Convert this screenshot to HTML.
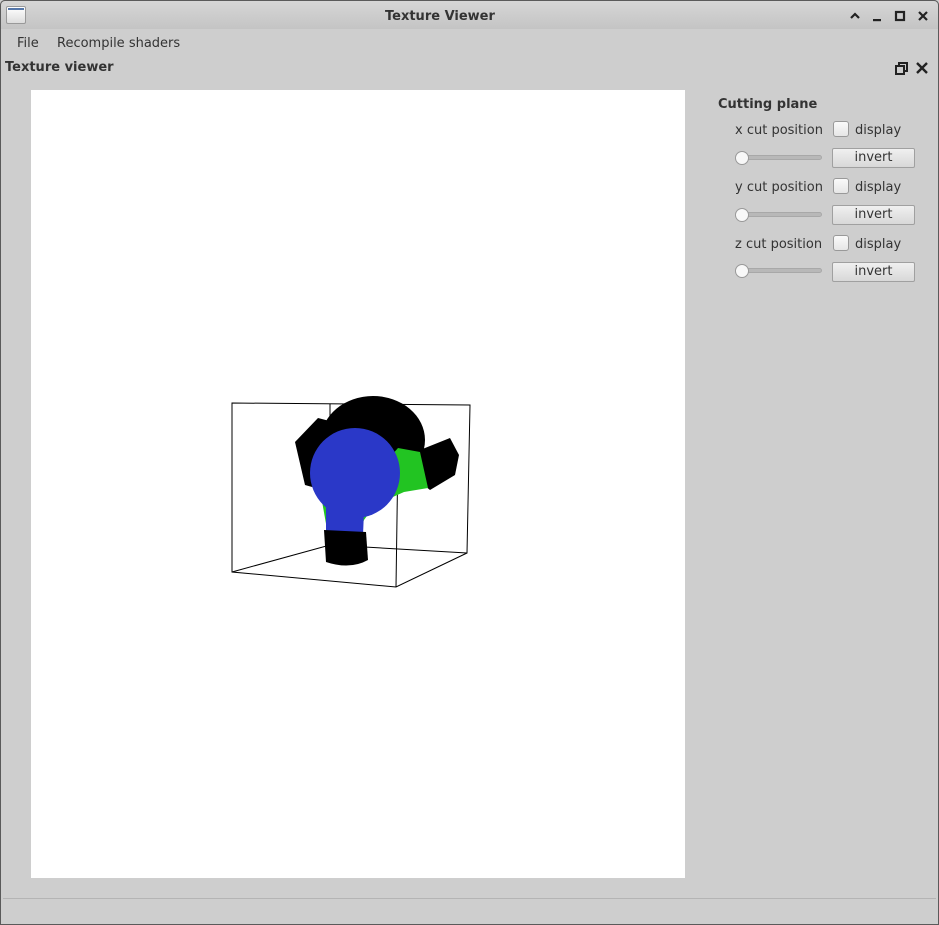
<!DOCTYPE html>
<html><head><meta charset="utf-8"><style>
*{margin:0;padding:0;box-sizing:border-box}
body{width:939px;height:925px;background:#cecece;font-family:"DejaVu Sans","Liberation Sans",sans-serif;font-size:13px;color:#333;position:relative;overflow:hidden}
.win{position:absolute;left:0;top:0;width:939px;height:925px;border:1px solid #5a5a5a;border-radius:5px 5px 0 0}
.title{position:absolute;left:0;top:0;width:939px;height:29px;background:linear-gradient(#d6d6d6,#c4c4c4);border-radius:5px 5px 0 0;border:1px solid #5a5a5a;border-bottom:none}
.title .t{position:absolute;left:384px;top:8px;font-weight:bold;font-size:13px;color:#333}
.abs{position:absolute}
.cb{position:absolute;width:16px;height:16px;border:1px solid #999;border-radius:3px;background:linear-gradient(#fafafa,#e6e6e6)}
.btn{position:absolute;width:83px;height:20px;border:1px solid #a0a0a0;border-radius:2px;background:linear-gradient(#f0f0f0,#d8d8d8);text-align:center;line-height:18px}
.sl{position:absolute;width:82px;height:5px;border-radius:3px;background:#b8b8b8;border:1px solid #a8a8a8}
.kn{position:absolute;width:14px;height:14px;border-radius:50%;background:#f8f8f8;border:1px solid #999}
</style></head><body>
<div class="win"></div>
<div class="title"><div class="t">Texture Viewer</div></div>
<div class="abs" style="left:6px;top:6px;width:20px;height:18px;border:1px solid #999;border-radius:2px;background:linear-gradient(#fff,#ddd)"><div style="height:2px;background:#5577aa;margin:1px 1px 0"></div></div>
<svg class="abs" style="left:845px;top:8px" width="85" height="16">
<path d="M6 10 L10 6 L14 10" stroke="#222" stroke-width="2.2" fill="none"/>
<rect x="28" y="11" width="8" height="2.2" fill="#222"/>
<rect x="51" y="4" width="8" height="8" stroke="#222" stroke-width="2.2" fill="none"/>
<path d="M74 4 L82 12 M82 4 L74 12" stroke="#222" stroke-width="2.2"/>
</svg>
<div class="abs" style="left:17px;top:36px">File</div>
<div class="abs" style="left:57px;top:36px">Recompile shaders</div>
<div class="abs" style="left:5px;top:60px;font-weight:bold">Texture viewer</div>
<svg class="abs" style="left:893px;top:60px" width="38" height="18">
<rect x="3" y="6" width="8" height="8" stroke="#222" stroke-width="2" fill="none"/>
<path d="M6 6 V3 H14 V11 H11" stroke="#222" stroke-width="2" fill="none"/>
<path d="M24 3 L34 13 M34 3 L24 13" stroke="#222" stroke-width="2.4"/>
</svg>
<div class="abs" style="left:31px;top:90px;width:654px;height:788px;background:#fff"></div>
<svg class="abs" style="left:0;top:0" width="939" height="925">
<g stroke="#000" stroke-width="1" fill="none">
<path d="M232 403 L470 405 L467 553 L396 587 L232 572 Z"/>
<path d="M232 403 L232 572"/>
<path d="M330 404 L330 545 M232 572 L330 545 L467 553"/>
<path d="M396 587 L398 450"/>
</g>
<ellipse cx="373" cy="440" rx="52" ry="44" fill="#000"/>
<path d="M295 442 L318 418 L345 425 L330 492 L305 485 Z" fill="#000"/>
<path d="M415 452 L450 438 L459 455 L455 475 L430 490 L405 470 Z" fill="#000"/>
<path d="M398 448 L420 452 L428 488 L404 492 L375 505 L364 520 L356 518 L352 500 Z" fill="#22c422"/>
<path d="M320 490 L365 495 L364 520 L358 535 L328 535 Z" fill="#22c422"/>
<circle cx="355" cy="473" r="45" fill="#2a38c8"/>
<path d="M326 488 L365 488 L363 535 L326 535 Z" fill="#2a38c8"/>
<path d="M324 530 L366 532 L368 560 Q350 570 326 562 Z" fill="#000"/>
</svg>
<div class="abs" style="left:718px;top:97px;font-weight:bold">Cutting plane</div>
<div class="abs" style="left:735px;top:123px">x cut position</div>
<div class="cb" style="left:833px;top:121px"></div>
<div class="abs" style="left:855px;top:123px">display</div>
<div class="sl" style="left:740px;top:155px"></div><div class="kn" style="left:735px;top:151px"></div>
<div class="btn" style="left:832px;top:148px">invert</div>
<div class="abs" style="left:735px;top:180px">y cut position</div>
<div class="cb" style="left:833px;top:178px"></div>
<div class="abs" style="left:855px;top:180px">display</div>
<div class="sl" style="left:740px;top:212px"></div><div class="kn" style="left:735px;top:208px"></div>
<div class="btn" style="left:832px;top:205px">invert</div>
<div class="abs" style="left:735px;top:237px">z cut position</div>
<div class="cb" style="left:833px;top:235px"></div>
<div class="abs" style="left:855px;top:237px">display</div>
<div class="sl" style="left:740px;top:268px"></div><div class="kn" style="left:735px;top:264px"></div>
<div class="btn" style="left:832px;top:262px">invert</div>
<div class="abs" style="left:3px;top:898px;width:933px;height:1px;background:#b4b4b4"></div>
</body></html>
